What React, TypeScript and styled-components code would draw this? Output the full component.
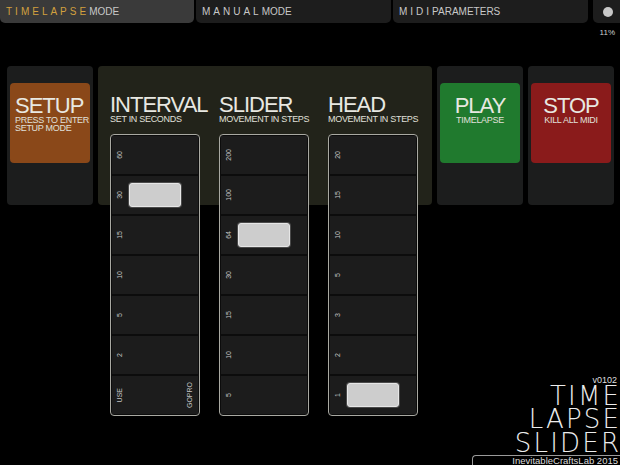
import React from "react";
import styled, { createGlobalStyle } from "styled-components";

const Global = createGlobalStyle`
  html, body { margin: 0; padding: 0; background: #000; }
  body { font-family: "Liberation Sans", Arial, sans-serif; }
`;

const Screen = styled.div`
  width: 620px;
  height: 465px;
  background: #000;
  overflow: hidden;
  display: flex;
  flex-direction: column;
  font-family: "Liberation Sans", Arial, sans-serif;
  color: #e6e6e0;
`;

const TabBar = styled.div`
  display: flex;
  height: 23px;
  gap: 2px;
  flex-shrink: 0;
`;

const Tab = styled.div<{ $active?: boolean; $w: number }>`
  width: ${(p) => p.$w}px;
  flex-shrink: 0;
  background: ${(p) => (p.$active ? "#3a3a3a" : "#1d1d1d")};
  border-radius: 0 0 5px 5px;
  display: flex;
  align-items: center;
  padding-left: 6px;
  box-sizing: border-box;
  font-size: 10px;
  color: #c8c8c8;
  white-space: nowrap;
`;

const Spaced = styled.span<{ $orange?: boolean }>`
  letter-spacing: 3px;
  color: ${(p) => (p.$orange ? "#d2a03e" : "#c8c8c8")};
`;

const DotTab = styled.div`
  flex: 1;
  margin-left: 3px;
  background: #1d1d1d;
  border-radius: 0 0 0 5px;
  display: flex;
  align-items: center;
  justify-content: center;
`;

const Dot = styled.div`
  width: 10px;
  height: 10px;
  border-radius: 50%;
  background: #c8c8c8;
  margin-left: 3px;
`;

const StatusRow = styled.div`
  height: 43px;
  flex-shrink: 0;
  display: flex;
  justify-content: flex-end;
  padding: 5px 5px 0 0;
  box-sizing: border-box;
  font-size: 8px;
  color: #cfcfcf;
`;

const PanelRow = styled.div`
  height: 139px;
  flex-shrink: 0;
  display: flex;
  gap: 5px;
  padding-left: 7px;
`;

const SidePanel = styled.div`
  width: 86px;
  background: #1c1d1d;
  border-radius: 4px;
  padding-top: 17px;
  box-sizing: border-box;
  display: flex;
  justify-content: center;
  align-items: flex-start;
`;

const BigButton = styled.div<{ $bg: string; $center?: boolean }>`
  width: 80px;
  height: 80px;
  border-radius: 4px;
  background: ${(p) => p.$bg};
  box-sizing: border-box;
  padding: 13px ${(p) => (p.$center ? "0" : "5px")} 0;
  display: flex;
  flex-direction: column;
  align-items: ${(p) => (p.$center ? "center" : "flex-start")};
  text-align: ${(p) => (p.$center ? "center" : "left")};
`;

const Title = styled.div`
  font-size: 22px;
  line-height: 20px;
  letter-spacing: -1px;
  color: #e8e8e2;
  white-space: nowrap;
`;

const Sub = styled.div`
  font-size: 9px;
  line-height: 8px;
  letter-spacing: -0.3px;
  color: #e0e0da;
  white-space: nowrap;
`;

const MainPanel = styled.div`
  width: 334px;
  background: #22231a;
  border-radius: 4px;
  padding: 29px 0 0 12px;
  box-sizing: border-box;
  display: flex;
  gap: 19px;
  align-items: flex-start;
`;

const Group = styled.div`
  width: 90px;
  display: flex;
  flex-direction: column;
`;

const Column = styled.div`
  margin-top: 11px;
  width: 90px;
  box-sizing: border-box;
  border: 1px solid #a9a9a2;
  border-radius: 4px;
  background: #0c0c0c;
  padding: 1px;
  display: flex;
  flex-direction: column;
  gap: 2px;
`;

const Cell = styled.div`
  height: 38px;
  background: #1c1c1c;
  display: grid;
  grid-template-columns: 1fr 52px 1fr;
  align-items: center;
  padding: 0 4px;
`;

const CellLabel = styled.span<{ $end?: boolean }>`
  writing-mode: vertical-rl;
  transform: rotate(180deg);
  font-size: 7px;
  line-height: 8px;
  color: #c4c4c4;
  justify-self: ${(p) => (p.$end ? "end" : "start")};
`;

const Handle = styled.div`
  grid-column: 2;
  width: 52px;
  height: 24px;
  box-sizing: border-box;
  background: #cdcdcd;
  border: 1px solid #e6e6e6;
  border-radius: 3px;
  box-shadow: 0 0 0 1px #4a4a4a;
`;

const Bottom = styled.div`
  flex: 1;
  display: flex;
  justify-content: flex-end;
  align-items: flex-end;
`;

const Logo = styled.div`
  display: flex;
  flex-direction: column;
  align-items: flex-end;
`;

const Version = styled.div`
  font-size: 9px;
  line-height: 9px;
  color: #dedede;
  padding-right: 3px;
`;

const LogoLine = styled.div`
  font-family: "DejaVu Sans", "Liberation Sans", sans-serif;
  font-weight: 200;
  font-size: 26px;
  line-height: 23.5px;
  letter-spacing: 2.2px;
  margin-right: -1.2px;
  color: #ececec;
`;

const Credit = styled.div`
  width: 148px;
  height: 10px;
  box-sizing: border-box;
  border-top: 1px solid #9a9a9a;
  border-left: 1px solid #9a9a9a;
  border-top-left-radius: 4px;
  font-size: 9.5px;
  line-height: 9px;
  color: #dcdcdc;
  text-align: right;
  padding-right: 2px;
`;

type CellDef = string | { left: string; right: string };

const groups: { title: string; sub: string; cells: CellDef[]; sel: number }[] = [
  {
    title: "INTERVAL",
    sub: "SET IN SECONDS",
    cells: ["60", "30", "15", "10", "5", "2", { left: "USE", right: "GOPRO" }],
    sel: 1,
  },
  {
    title: "SLIDER",
    sub: "MOVEMENT IN STEPS",
    cells: ["200", "100", "64", "30", "15", "10", "5"],
    sel: 2,
  },
  {
    title: "HEAD",
    sub: "MOVEMENT IN STEPS",
    cells: ["20", "15", "10", "5", "3", "2", "1"],
    sel: 6,
  },
];

export default function App() {
  return (
    <Screen>
      <Global />
      <TabBar>
        <Tab $active $w={194}>
          <Spaced $orange>TIMELAPSE</Spaced>MODE
        </Tab>
        <Tab $w={195}>
          <Spaced>MANUAL</Spaced>MODE
        </Tab>
        <Tab $w={195}>
          <Spaced>MIDI</Spaced>PARAMETERS
        </Tab>
        <DotTab>
          <Dot />
        </DotTab>
      </TabBar>
      <StatusRow>11%</StatusRow>
      <PanelRow>
        <SidePanel>
          <BigButton $bg="#8a4819">
            <Title>SETUP</Title>
            <Sub>PRESS TO ENTER</Sub>
            <Sub>SETUP MODE</Sub>
          </BigButton>
        </SidePanel>
        <MainPanel>
          {groups.map((g) => (
            <Group key={g.title}>
              <Title>{g.title}</Title>
              <Sub>{g.sub}</Sub>
              <Column>
                {g.cells.map((c, i) => (
                  <Cell key={i}>
                    {typeof c === "string" ? (
                      <CellLabel>{c}</CellLabel>
                    ) : (
                      <CellLabel>{c.left}</CellLabel>
                    )}
                    {i === g.sel ? <Handle /> : <span />}
                    {typeof c !== "string" && <CellLabel $end>{c.right}</CellLabel>}
                  </Cell>
                ))}
              </Column>
            </Group>
          ))}
        </MainPanel>
        <SidePanel>
          <BigButton $bg="#207a2e" $center>
            <Title>PLAY</Title>
            <Sub>TIMELAPSE</Sub>
          </BigButton>
        </SidePanel>
        <SidePanel>
          <BigButton $bg="#8a1b1b" $center>
            <Title>STOP</Title>
            <Sub>KILL ALL MIDI</Sub>
          </BigButton>
        </SidePanel>
      </PanelRow>
      <Bottom>
        <Logo>
          <Version>v0102</Version>
          <LogoLine>TIME</LogoLine>
          <LogoLine>LAPSE</LogoLine>
          <LogoLine>SLIDER</LogoLine>
          <Credit>InevitableCraftsLab 2015</Credit>
        </Logo>
      </Bottom>
    </Screen>
  );
}
